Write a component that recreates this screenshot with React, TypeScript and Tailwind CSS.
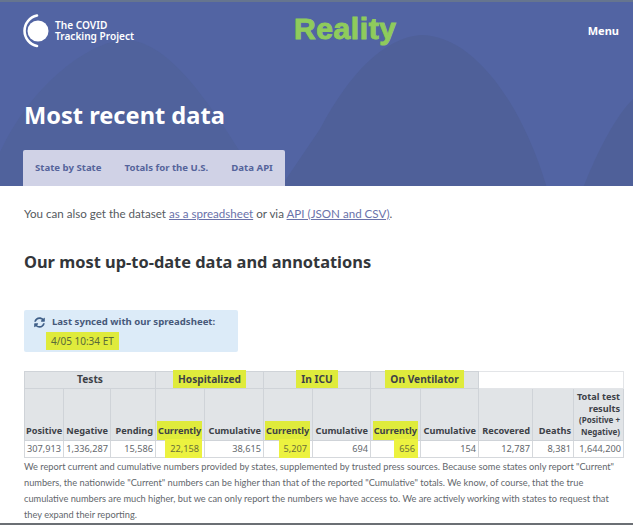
import { FaSyncAlt } from "react-icons/fa";

const font = "font-['Noto_Sans','Open_Sans',sans-serif]";

const widths = [39, 47, 45, 49, 59, 49, 58, 50, 58, 54, 41, 50];

const headers = ["Positive", "Negative", "Pending", "Currently", "Cumulative", "Currently", "Cumulative", "Currently", "Cumulative", "Recovered", "Deaths"];

const values = ["307,913", "1,336,287", "15,586", "22,158", "38,615", "5,207", "694", "656", "154", "12,787", "8,381", "1,644,200"];

function Mark({ children }: { children: React.ReactNode }) {
    return <span className="bg-[#dfeb3c] px-[5px] py-[2px]">{children}</span>;
}

function Logo() {
    return (
        <svg width="29" height="34" viewBox="0 0 29 34">
            <circle cx="15" cy="17" r="10.5" fill="#ffffff" />
            <path d="M14 1.6 A15.5 15.5 0 0 0 14 32" fill="none" stroke="#ffffff" strokeWidth="2.6" strokeLinecap="round" />
        </svg>
    );
}

function GroupHeader({ label, span, mark }: { label: string; span: number; mark?: boolean }) {
    return (
        <th colSpan={span} className="h-[17px] border border-[#cfd3d8] bg-[#e1e4e7] p-0 text-center text-[10.2px] font-bold text-[#3d4147]">
            {mark ? <Mark>{label}</Mark> : label}
        </th>
    );
}

export default function App() {
    return (
        <div className={`relative h-[525px] w-[633px] overflow-hidden bg-white ${font}`}>
            {/* hero */}
            <div className="relative h-[186px] overflow-hidden border-t-2 border-[#66758f] bg-[#5264a3]">
                <svg className="absolute inset-0" width="633" height="186" viewBox="0 0 633 186">
                    <path d="M0 150 C30 85 85 42 122 38 C165 36 205 90 262 186 L0 186 Z" fill="#50629c" />
                    <path d="M320 127 C350 70 385 36 420 33 C470 32 520 95 547 186 L280 186 Z" fill="#4f6099" />
                    <path d="M583 186 C597 150 615 115 633 97 L633 186 Z" fill="#4f6099" />
                </svg>
                <div className="relative flex h-[58px] items-center justify-between pr-[14px] pl-[23px]">
                    <div className="flex items-center gap-[3px]">
                        <Logo />
                        <div className="text-[10.1px] leading-[11.5px] font-semibold text-white">
                            <div>The COVID</div>
                            <div>Tracking Project</div>
                        </div>
                    </div>
                    <div className="absolute top-[8px] left-[294px] font-['Liberation_Sans',sans-serif] text-[30px] leading-[38px] font-bold tracking-[0.6px] text-[#8fcb5c] [-webkit-text-stroke:1px_#8fcb5c]">
                        Reality
                    </div>
                    <div className="text-[11px] font-bold text-white">Menu</div>
                </div>
                <h1 className="relative mt-[37px] ml-[24px] text-[23.6px] leading-[36px] font-bold text-white">Most recent data</h1>
                <div className="absolute top-[148px] left-[23px] flex h-[36px] w-[262px] items-center gap-[23px] rounded-t-[2px] bg-[#d0d2e6] pl-[12px] text-[9.6px] font-bold text-[#55649b]">
                    <span>State by State</span>
                    <span>Totals for the U.S.</span>
                    <span>Data API</span>
                </div>
            </div>

            {/* intro */}
            <p className="mt-[19px] ml-[24px] font-['Lato',sans-serif] text-[11.6px] leading-[18px] text-[#555a60]">
                You can also get the dataset <a className="text-[#6a72aa] underline">as a spreadsheet</a> or via{" "}
                <a className="text-[#6a72aa] underline">API (JSON and CSV)</a>.
            </p>
            <h2 className="mt-[27px] ml-[24px] text-[16.4px] leading-[24px] font-bold text-[#33363a]">
                Our most up-to-date data and annotations
            </h2>

            {/* sync box */}
            <div className="mt-[36px] ml-[24px] h-[42px] w-[214px] rounded-[2px] bg-[#dcebf8] pt-[5px] pl-[10px] text-[9.6px] leading-[14px] text-[#47597a]">
                <div className="flex items-center gap-[7px] font-bold">
                    <FaSyncAlt className="h-[11px] w-[11px] text-[#3f5f88]" />
                    <span>Last synced with our spreadsheet:</span>
                </div>
                <div className="mt-[5px] ml-[12px] text-[10px] text-[#5a6a3a]">
                    <Mark>4/05 10:34 ET</Mark>
                </div>
            </div>

            {/* table */}
            <table className="mt-[19px] ml-[24px] w-[599px] table-fixed">
                <colgroup>
                    {widths.map((w, i) => (
                        <col key={i} style={{ width: w }} />
                    ))}
                </colgroup>
                <thead>
                    <tr>
                        <GroupHeader label="Tests" span={3} />
                        <GroupHeader label="Hospitalized" span={2} mark />
                        <GroupHeader label="In ICU" span={2} mark />
                        <GroupHeader label="On Ventilator" span={2} mark />
                        <th colSpan={3} className="border border-[#e3e5e8] bg-white p-0"></th>
                    </tr>
                    <tr>
                        {headers.map((h, i) => (
                            <th key={i} className="h-[52px] whitespace-nowrap border border-[#cfd3d8] bg-[#e1e4e7] px-[1px] pr-[2px] pb-[3px] text-right align-bottom text-[9.2px] leading-[12px] font-bold text-[#3d4147]">
                                {h === "Currently" ? <span className="bg-[#dfeb3c] px-[1px] py-[3px]">{h}</span> : h}
                            </th>
                        ))}
                        <th className="border border-[#cfd3d8] bg-[#e1e4e7] pr-[3px] pb-[3px] text-right align-bottom text-[9.2px] leading-[11.5px] font-bold text-[#3d4147]">
                            <div>Total test results</div>
                            <div className="text-[8px]">(Positive + Negative)</div>
                        </th>
                    </tr>
                </thead>
                <tbody>
                    <tr>
                        {values.map((v, i) => {
                            const marked = i === 3 || i === 5 || i === 7;
                            return (
                                <td key={i} className="h-[17px] whitespace-nowrap border border-[#d5d8dc] p-0 pr-[2px] text-right text-[9.2px] text-[#64686d]">
                                    {marked ? <span className="bg-[#ecf23f] py-[3px] pr-[3px] pl-[5px] text-[#6a6f3a]">{v}</span> : v}
                                </td>
                            );
                        })}
                    </tr>
                </tbody>
            </table>

            <p className="mt-[1px] ml-[24px] w-[596px] font-['Lato',sans-serif] text-[9.25px] leading-[16px] text-[#63676c]">
                We report current and cumulative numbers provided by states, supplemented by trusted press sources. Because some states only report "Current" numbers, the nationwide "Current" numbers can be higher than that of the reported "Cumulative" totals. We know, of course, that the true cumulative numbers are much higher, but we can only report the numbers we have access to. We are actively working with states to request that they expand their reporting.
            </p>

            {/* window edge at the bottom of the capture */}
            <div className="absolute right-0 bottom-0 left-0 h-[2px] bg-[#6b6f74]"></div>
        </div>
    );
}
